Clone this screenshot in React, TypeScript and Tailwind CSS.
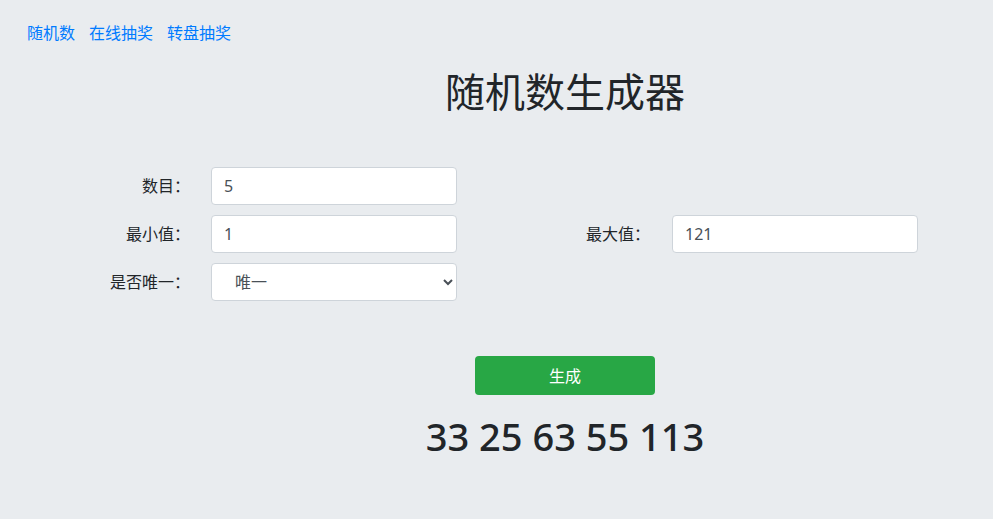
import React, { useState } from 'react'

const App = () => {
  const [count, setCount] = useState("5");
  const [min, setMin] = useState("1");
  const [max, setMax] = useState("121");
  const [unique, setUnique] = useState("1");

  const inputClass = "w-[246px] h-[38px] px-3 bg-white border border-[#ced4da] rounded text-[16px] text-[#495057] outline-none";

  return (
    <div className="min-h-screen bg-[#e9ecef] text-[#212529]" style={{ fontFamily: '"Noto Sans", "Noto Sans CJK SC", sans-serif' }}>
      <nav className="flex gap-[14px] pl-[27px] pt-[21px] text-[16px] leading-6 text-[#007bff]">
        <a href="#">随机数</a>
        <a href="#">在线抽奖</a>
        <a href="#">转盘抽奖</a>
      </nav>

      <div className="pl-[137px]">
        <h1 className="mt-[23px] text-center text-[40px] leading-[48px] font-normal">随机数生成器</h1>
      </div>

      <form className="mt-[51px] flex flex-col gap-[10px]">
        <div className="flex items-center">
          <label className="w-[190px] text-right text-[16px]">数目：</label>
          <input className={`ml-[21px] ${inputClass}`} value={count} onChange={(e) => setCount(e.target.value)} />
        </div>
        <div className="flex items-center">
          <label className="w-[190px] text-right text-[16px]">最小值：</label>
          <input className={`ml-[21px] ${inputClass}`} value={min} onChange={(e) => setMin(e.target.value)} />
          <label className="w-[193px] text-right text-[16px]">最大值：</label>
          <input className={`ml-[22px] ${inputClass}`} value={max} onChange={(e) => setMax(e.target.value)} />
        </div>
        <div className="flex items-center">
          <label className="w-[190px] text-right text-[16px]">是否唯一：</label>
          <select className={`ml-[21px] ${inputClass} pl-[19px]`} value={unique} onChange={(e) => setUnique(e.target.value)}>
            <option value="1">唯一</option>
            <option value="0">不唯一</option>
          </select>
        </div>
      </form>

      <div className="pl-[137px] flex flex-col items-center">
        <button type="button" className="mt-[55px] w-[180px] h-[39px] bg-[#28a745] text-white text-[16px] rounded">生成</button>
        <div className="mt-[14px] text-[38px] leading-[54px] font-medium">33 25 63 55 113</div>
      </div>
    </div>
  )
}

export default App;
